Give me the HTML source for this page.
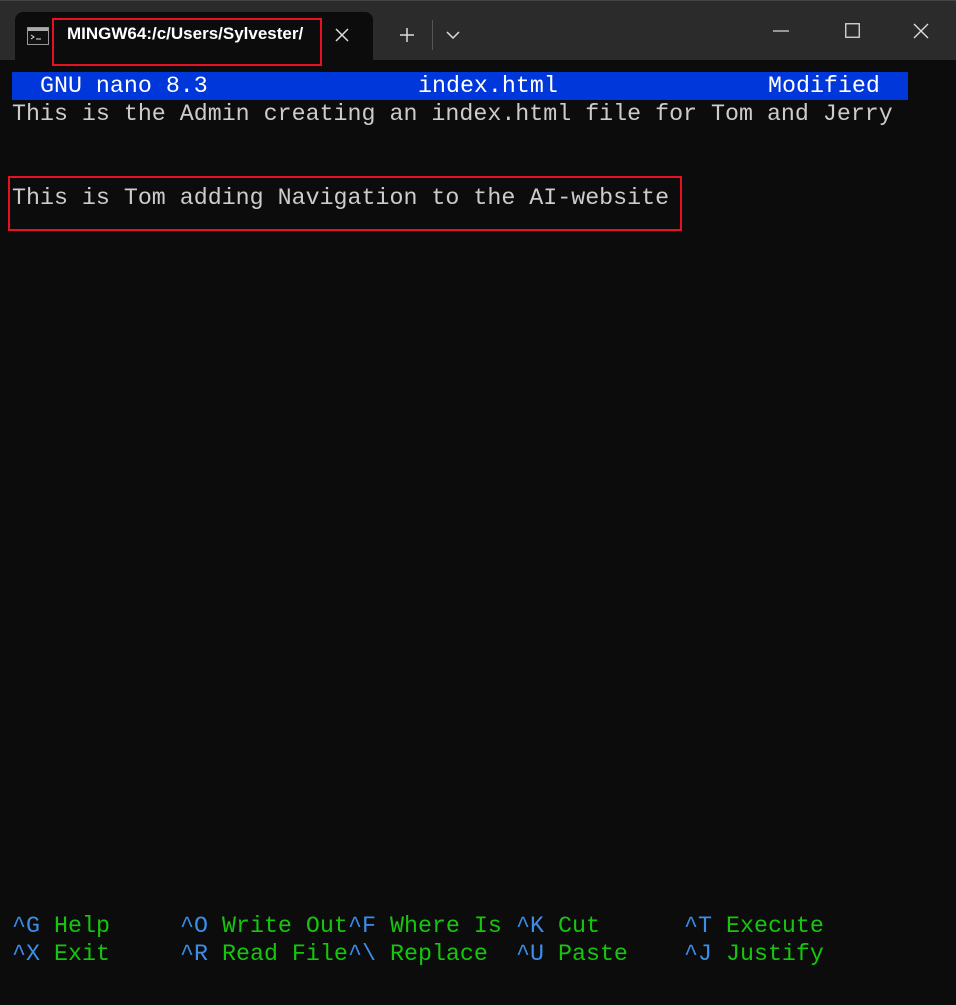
<!DOCTYPE html>
<html><head><meta charset="utf-8"><style>
*{margin:0;padding:0;box-sizing:border-box}
body{width:956px;height:1005px;background:#0c0c0c;position:relative;overflow:hidden;font-family:"Liberation Sans",sans-serif}
.top{position:absolute;left:0;top:0;width:956px;height:60px;background:#2b2b2b;border-top:1px solid #444}
.tab{position:absolute;left:15px;top:12px;width:358px;height:48px;background:#0c0c0c;border-radius:8px 8px 0 0}
.t{position:absolute;font-family:"Liberation Mono",monospace;font-size:23.3px;line-height:28px;white-space:pre;color:#cccccc}
.bar{position:absolute;left:12px;top:72px;width:896px;height:28px;background:#0037da}
.k{color:#3b8eea}.g{color:#16c60c}
.red{position:absolute;border:2px solid #e81123}
</style></head><body>
<div class="top"></div>
<div class="tab"></div>
<svg style="position:absolute;left:27px;top:27px" width="22" height="18"><rect x="0.5" y="0.5" width="21" height="17" fill="#111" stroke="#999"/><rect x="1" y="1" width="20" height="3" fill="#aaa"/><path d="M4 8 L7 10 L4 12 M9 12 H14" stroke="#ddd" fill="none" stroke-width="1"/></svg>
<div style="position:absolute;left:67px;top:24px;color:#fff;font-size:17px;font-weight:bold;width:248px;overflow:hidden;white-space:nowrap">MINGW64:/c/Users/Sylvester/</div>
<svg style="position:absolute;left:335px;top:28px" width="14" height="14"><path d="M1 1 L13 13 M13 1 L1 13" stroke="#ddd" stroke-width="1.5"/></svg>
<svg style="position:absolute;left:399px;top:27px" width="16" height="16"><path d="M8 1 V15 M1 8 H15" stroke="#ddd" stroke-width="1.5"/></svg>
<div style="position:absolute;left:432px;top:20px;width:1px;height:30px;background:#555"></div>
<svg style="position:absolute;left:446px;top:31px" width="14" height="8"><path d="M1 1 L7 7 L13 1" stroke="#ddd" stroke-width="1.5" fill="none"/></svg>
<svg style="position:absolute;left:773px;top:30px" width="16" height="2"><path d="M0 1 H16" stroke="#ddd" stroke-width="1.2"/></svg>
<svg style="position:absolute;left:845px;top:23px" width="15" height="15"><rect x="0.75" y="0.75" width="13.5" height="13.5" fill="none" stroke="#ddd" stroke-width="1.3"/></svg>
<svg style="position:absolute;left:913px;top:23px" width="16" height="16"><path d="M1 1 L15 15 M15 1 L1 15" stroke="#ddd" stroke-width="1.4"/></svg>
<div class="red" style="left:52px;top:18px;width:270px;height:48px"></div>
<div class="bar"></div>
<div class="t" style="top:72px;left:40px;color:#fff">GNU nano 8.3</div>
<div class="t" style="top:72px;left:418px;color:#fff">index.html</div>
<div class="t" style="top:72px;left:768px;color:#fff">Modified</div>
<div class="t" style="top:100px;left:12px">This is the Admin creating an index.html file for Tom and Jerry</div>
<div class="t" style="top:184px;left:12px">This is Tom adding Navigation to the AI-website</div>
<div class="red" style="left:8px;top:176px;width:674px;height:55px"></div>

<div class="t k" style="top:912px;left:12px">^G</div><div class="t g" style="top:912px;left:54px">Help</div>
<div class="t k" style="top:912px;left:180px">^O</div><div class="t g" style="top:912px;left:222px">Write Out</div>
<div class="t k" style="top:912px;left:348px">^F</div><div class="t g" style="top:912px;left:390px">Where Is</div>
<div class="t k" style="top:912px;left:516px">^K</div><div class="t g" style="top:912px;left:558px">Cut</div>
<div class="t k" style="top:912px;left:684px">^T</div><div class="t g" style="top:912px;left:726px">Execute</div>

<div class="t k" style="top:940px;left:12px">^X</div><div class="t g" style="top:940px;left:54px">Exit</div>
<div class="t k" style="top:940px;left:180px">^R</div><div class="t g" style="top:940px;left:222px">Read File</div>
<div class="t k" style="top:940px;left:348px">^\</div><div class="t g" style="top:940px;left:390px">Replace</div>
<div class="t k" style="top:940px;left:516px">^U</div><div class="t g" style="top:940px;left:558px">Paste</div>
<div class="t k" style="top:940px;left:684px">^J</div><div class="t g" style="top:940px;left:726px">Justify</div>
</body></html>
